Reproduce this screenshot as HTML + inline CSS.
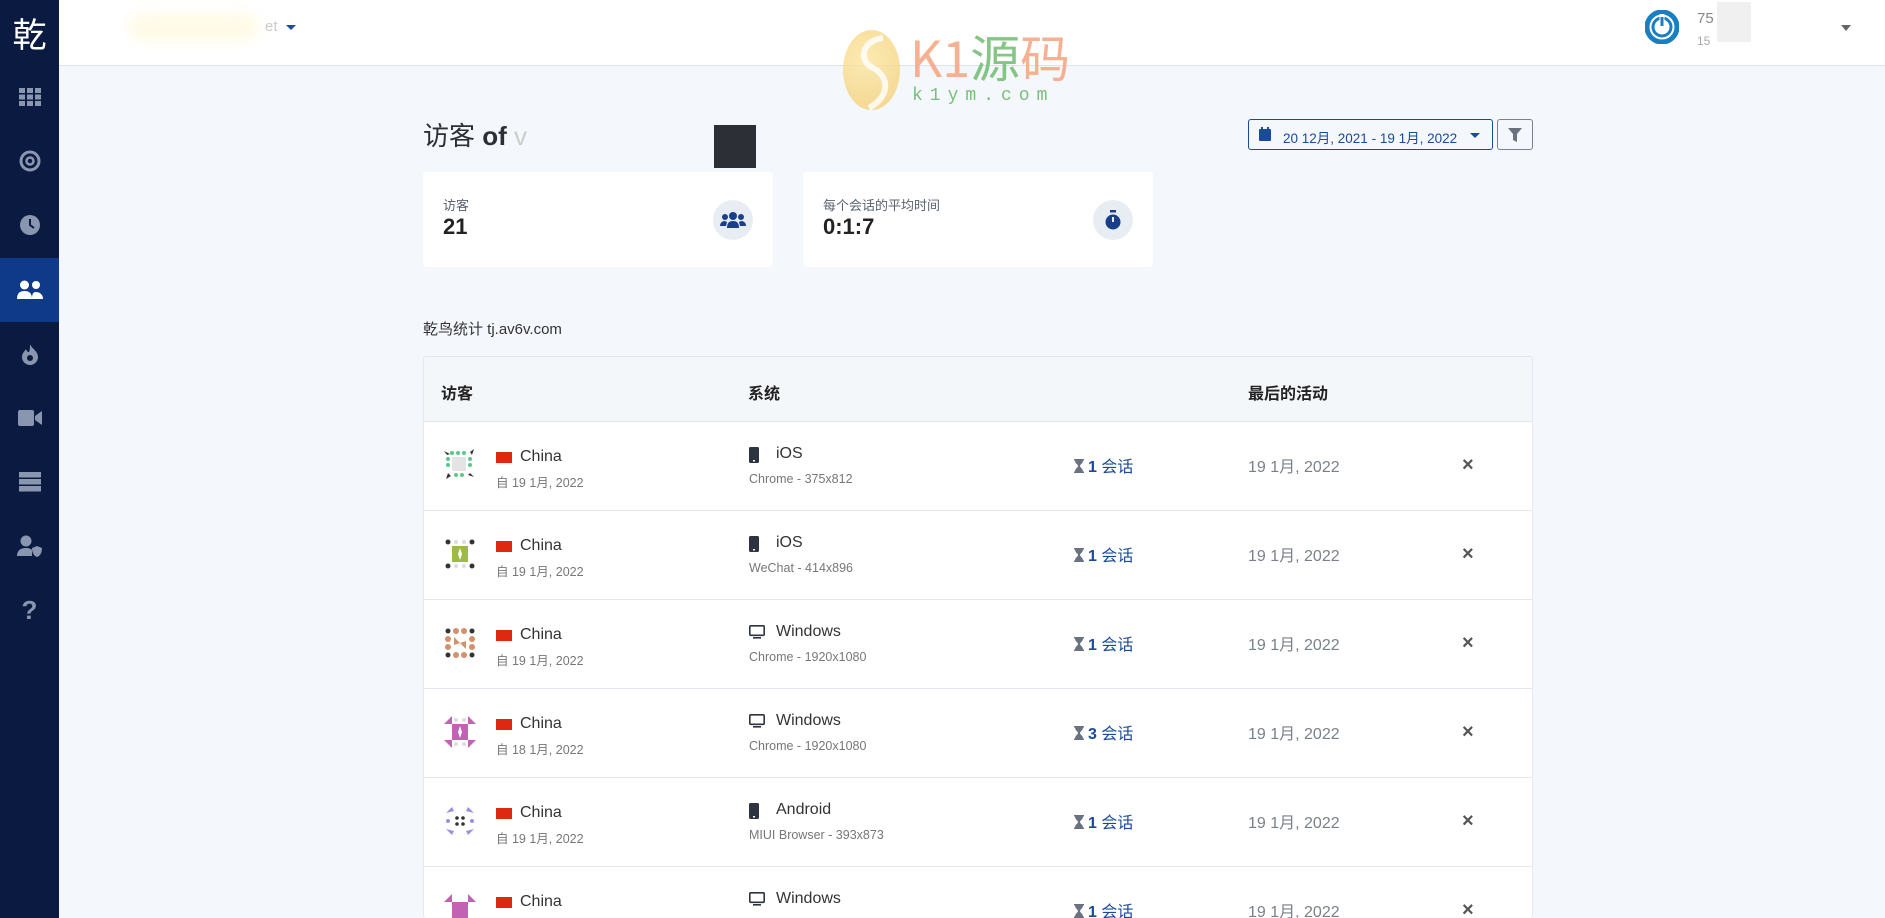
<!DOCTYPE html>
<html><head><meta charset="utf-8"><style>
*{box-sizing:border-box;margin:0;padding:0}
html{width:1885px;height:918px;overflow:hidden}
body{width:1885px;height:918px;overflow:hidden;background:#f4f7fb;font-family:"Liberation Sans","Noto Sans CJK SC",sans-serif;position:relative;color:#2b2f36}
.sb{position:absolute;left:0;top:0;width:59px;height:918px;background:#0b1a40}
.sb .it{position:absolute;left:0;width:59px;height:64px;display:flex;align-items:center;justify-content:center}
.sb .act{background:#0f3a8a}
.hd{position:absolute;left:59px;top:0;right:0;height:66px;background:#fff;border-bottom:1px solid #dde3ec}
.abs{position:absolute}
.card{position:absolute;background:#fff;border-radius:3px;top:172px;height:95px;width:350px}
.card .l{position:absolute;left:20px;top:23px;font-size:13px;color:#5a6270}
.card .v{position:absolute;left:20px;top:42px;font-size:22px;font-weight:bold;color:#222}
.card .ic{position:absolute;right:20px;top:28px;width:40px;height:40px;border-radius:50%;background:#e8edf4;display:flex;align-items:center;justify-content:center}
.tbl{position:absolute;left:423px;top:356px;width:1110px;height:562px;overflow:hidden;background:#fff;border:1px solid #e3e7ee;border-bottom:none;border-radius:3px}
.th{height:65px;background:#f4f7fa;border-bottom:1px solid #e3e7ee;position:relative;font-size:16px;font-weight:bold;color:#222}
.th span{position:absolute;top:23px}
.row{height:89px;border-bottom:1px solid #e3e7ee;position:relative}
.row .av{position:absolute;left:20px;top:27px}
.row .fl{position:absolute;left:72px;top:30px;width:16px;height:11px;background:#de2910}
.row .c{position:absolute;left:96px;top:26px;font-size:16px;color:#333}
.row .cs{position:absolute;left:72px;top:50px;font-size:12.5px;color:#777}
.row .oi{position:absolute;left:325px;top:25px}
.row .os{position:absolute;left:352px;top:23px;font-size:16px;color:#333}
.row .ss{position:absolute;left:325px;top:50px;font-size:12.5px;color:#777}
.row .se{position:absolute;left:650px;top:31px;font-size:16px;color:#1a4a9a}
.row .se svg{vertical-align:-1px;margin-right:4px}
.row .se b{font-weight:bold}
.row .la{position:absolute;left:824px;top:31px;font-size:16px;color:#7a808a}
.row .x{position:absolute;left:1038px;top:32px;font-size:20px;color:#555;font-weight:bold}
</style></head><body>
<div class="sb">
 <div class="it" style="top:0px;color:#fff;font-size:34px;font-family:'Noto Sans CJK SC',sans-serif">乾</div>
 <div class="it" style="top:65px"><svg width="22" height="18" fill="#8a96b0"><rect x="0" y="0" width="6" height="5"/><rect x="8" y="0" width="6" height="5"/><rect x="16" y="0" width="6" height="5"/><rect x="0" y="6.5" width="6" height="5"/><rect x="8" y="6.5" width="6" height="5"/><rect x="16" y="6.5" width="6" height="5"/><rect x="0" y="13" width="6" height="5"/><rect x="8" y="13" width="6" height="5"/><rect x="16" y="13" width="6" height="5"/></svg></div>
 <div class="it" style="top:129px"><svg width="22" height="22"><circle cx="11" cy="11" r="9" fill="none" stroke="#8a96b0" stroke-width="3"/><circle cx="11" cy="11" r="3.5" fill="none" stroke="#8a96b0" stroke-width="2.5"/></svg></div>
 <div class="it" style="top:193px"><svg width="22" height="22"><circle cx="11" cy="11" r="10" fill="#8a96b0"/><path d="M11 5v6l4 3" stroke="#0b1a40" stroke-width="2" fill="none"/></svg></div>
 <div class="it act" style="top:258px"><svg width="26" height="20" fill="#fff"><circle cx="7.5" cy="5" r="4.5"/><circle cx="19" cy="5" r="4"/><path d="M0 19c0-6 3-8 7.5-8s7.5 2 7.5 8z"/><path d="M15 19c0-5 1-7 4-7s7 2 7 7z"/></svg></div>
 <div class="it" style="top:322px"><svg width="18" height="22" fill="#8a96b0"><path d="M9 1c1 4 8 7 8 13a8 8 0 0 1-16 0c0-4 3-6 4-8 1 3 2 3 3 3 1-2 1-5 1-8z"/><circle cx="9" cy="15" r="3" fill="#0b1a40"/></svg></div>
 <div class="it" style="top:386px"><svg width="24" height="16" fill="#8a96b0"><rect x="0" y="0" width="16" height="16" rx="2"/><path d="M17 6l7-5v14l-7-5z"/></svg></div>
 <div class="it" style="top:450px"><svg width="22" height="20" fill="#8a96b0"><rect y="0" width="22" height="5.5"/><rect y="7" width="22" height="5.5"/><rect y="14" width="22" height="5.5"/></svg></div>
 <div class="it" style="top:514px"><svg width="26" height="22" fill="#8a96b0"><circle cx="9" cy="6" r="5.5"/><path d="M0 21c0-6 4-8 9-8 3 0 5 1 6 2v6z"/><path d="M20 11l5 2c0 5-2 8-5 9-3-1-5-4-5-9z"/></svg></div>
 <div class="it" style="top:578px;color:#8a96b0;font-size:26px;font-weight:bold">?</div>
</div>
<div class="hd">
 <div class="abs" style="left:70px;top:12px;width:130px;height:30px;background:#fffbe8;border-radius:15px;filter:blur(6px)"></div>
 <div class="abs" style="left:206px;top:18px;font-size:15px;color:#ccc">et</div>
 <div class="abs" style="left:227px;top:25px;border:5px solid transparent;border-top:5px solid #1a4a9a"></div>
 <svg class="abs" style="left:1586px;top:10px" width="34" height="34"><circle cx="17" cy="17" r="15" fill="none" stroke="#1a7fc0" stroke-width="5"/><circle cx="17" cy="17" r="9" fill="none" stroke="#1a7fc0" stroke-width="3"/><path d="M17 4v10" stroke="#fff" stroke-width="5"/><path d="M17 7v9" stroke="#1a7fc0" stroke-width="3"/></svg>
 <div class="abs" style="left:1638px;top:10px;font-size:15px;color:#888">75</div>
 <div class="abs" style="left:1638px;top:34px;font-size:12px;color:#aaa">15</div>
 <div class="abs" style="left:1658px;top:2px;width:34px;height:40px;background:#f0f0f0"></div>
 <div class="abs" style="left:1782px;top:25px;border:5px solid transparent;border-top:6px solid #666"></div>
</div>
<!-- watermark -->
<div class="abs" style="left:843px;top:30px;width:57px;height:80px;border-radius:50%;background:radial-gradient(circle at 40% 40%,#fbe6a0,#f4cb70);opacity:.8"></div>
<svg class="abs" style="left:843px;top:30px" width="57" height="80"><path d="M40 8C20 10 14 30 30 38s18 28 -4 40" stroke="#fff" stroke-width="6" fill="none" opacity=".8"/></svg>
<div class="abs" style="left:910px;top:28px;font-size:50px;line-height:56px;color:#f5a986;font-family:'Noto Sans CJK SC',sans-serif;opacity:.9">K1<span style="color:#78c07a">源</span>码</div>
<div class="abs" style="left:912px;top:86px;font-size:18px;letter-spacing:7px;color:#78c07a;font-family:'Liberation Mono',monospace">k1ym.com</div>

<div class="abs" style="left:423px;top:116px;font-size:26px;color:#2b2f36">访客 <b>of</b> <span style="color:#ccc">v</span></div>
<div class="abs" style="left:714px;top:125px;width:42px;height:43px;background:#2d2f36"></div>
<div class="abs" style="left:1248px;top:119px;width:245px;height:31px;border:1px solid #1a4a9a;border-radius:3px;background:#f4f7fb;font-size:13.5px;color:#1a4a9a;padding:7px 0 0 34px">20 12月, 2021 - 19 1月, 2022</div>
<svg class="abs" style="left:1259px;top:127px" width="12" height="14" fill="#1a4a9a"><rect x="0" y="2" width="12" height="12" rx="1"/><rect x="2" y="0" width="2" height="3"/><rect x="8" y="0" width="2" height="3"/></svg>
<div class="abs" style="left:1470px;top:133px;border:5px solid transparent;border-top:5px solid #1a4a9a"></div>
<div class="abs" style="left:1497px;top:119px;width:36px;height:31px;border:1px solid #7a8290;border-radius:3px"></div>
<svg class="abs" style="left:1508px;top:128px" width="14" height="14" fill="#6a7280"><path d="M0 0h14l-5 6v8l-4-2v-6z"/></svg>

<div class="card" style="left:423px"><div class="l">访客</div><div class="v">21</div><div class="ic"><svg width="26" height="16" fill="#1a3f8a"><circle cx="13" cy="4" r="4"/><circle cx="5" cy="5" r="3"/><circle cx="21" cy="5" r="3"/><path d="M7 16c0-5 2-7 6-7s6 2 6 7z"/><path d="M0 14c0-3 2-5 5-5l2 1-1 4z"/><path d="M26 14c0-3-2-5-5-5l-2 1 1 4z"/></svg></div></div>
<div class="card" style="left:803px"><div class="l">每个会话的平均时间</div><div class="v">0:1:7</div><div class="ic"><svg width="16" height="20" fill="#1a3f8a"><rect x="5" y="0" width="6" height="2.5"/><circle cx="8" cy="12" r="7.5"/><path d="M8 7v5" stroke="#e8edf4" stroke-width="2"/></svg></div></div>

<div class="abs" style="left:423px;top:318px;font-size:15px;color:#333">乾鸟统计 tj.av6v.com</div>

<svg width="0" height="0" style="position:absolute"><defs><symbol id="hg" viewBox="0 0 10 14"><path d="M0 0h10v1.5H9c0 3-3 4-3 5.5s3 2.5 3 5.5h1V14H0v-1.5h1c0-3 3-4 3-5.5S1 4.5 1 1.5H0z" fill="#6a7280"/></symbol></defs></svg>

<div class="tbl">
 <div class="th"><span style="left:17px">访客</span><span style="left:324px">系统</span><span style="left:824px">最后的活动</span></div>
 
 <div class="row"><svg class="av" width="32" height="32"><g fill="#5ac88a"><circle cx="8" cy="4" r="2"/><circle cx="14" cy="4" r="2"/><circle cx="20" cy="4" r="2"/><circle cx="4" cy="10" r="2"/><circle cx="4" cy="16" r="2"/><circle cx="26" cy="10" r="2"/><circle cx="26" cy="16" r="2"/><circle cx="12" cy="26" r="2"/><circle cx="18" cy="26" r="2"/></g><rect x="8" y="8" width="14" height="14" fill="#e4e4e4"/><path d="M0 2l6 3-3 1zM30 0l-2 6-2-3zM2 30l2-6 3 3zM30 28l-6-2 2-2z" fill="#333"/></svg><div class="fl"></div><div class="c">China</div><div class="cs">自 19 1月, 2022</div><svg class="oi" width="10" height="16"><rect width="10" height="16" rx="1.5" fill="#2d3340"/><rect x="4" y="13" width="2" height="1.5" fill="#fff"/></svg><div class="os">iOS</div><div class="ss">Chrome - 375x812</div><div class="se"><svg width="10" height="14"><use href="#hg"/></svg><b>1</b> 会话</div><div class="la">19 1月, 2022</div><div class="x">×</div></div>

 <div class="row"><svg class="av" width="32" height="32"><g fill="#333"><circle cx="4" cy="4" r="2.5"/><circle cx="28" cy="4" r="2.5"/><circle cx="4" cy="28" r="2.5"/><circle cx="28" cy="28" r="2.5"/></g><g fill="#ddd"><circle cx="12" cy="4" r="2"/><circle cx="20" cy="4" r="2"/><circle cx="12" cy="28" r="2"/><circle cx="20" cy="28" r="2"/></g><rect x="8" y="8" width="16" height="16" fill="#9dbb44"/><path d="M16 10l2 6-2 6-2-6z" fill="#fff"/></svg><div class="fl"></div><div class="c">China</div><div class="cs">自 19 1月, 2022</div><svg class="oi" width="10" height="16"><rect width="10" height="16" rx="1.5" fill="#2d3340"/><rect x="4" y="13" width="2" height="1.5" fill="#fff"/></svg><div class="os">iOS</div><div class="ss">WeChat - 414x896</div><div class="se"><svg width="10" height="14"><use href="#hg"/></svg><b>1</b> 会话</div><div class="la">19 1月, 2022</div><div class="x">×</div></div>

 <div class="row"><svg class="av" width="32" height="32"><g fill="#333"><circle cx="4" cy="4" r="2.5"/><circle cx="28" cy="4" r="2.5"/><circle cx="4" cy="28" r="2.5"/><circle cx="28" cy="28" r="2.5"/></g><g fill="#d4906a"><circle cx="12" cy="4" r="3"/><circle cx="20" cy="4" r="3"/><circle cx="12" cy="28" r="3"/><circle cx="20" cy="28" r="3"/><circle cx="4" cy="12" r="3"/><circle cx="4" cy="20" r="3"/><circle cx="28" cy="12" r="3"/><circle cx="28" cy="20" r="3"/><path d="M10 10l6 6-6 2zM22 22l-6-6 6-2z"/></g></svg><div class="fl"></div><div class="c">China</div><div class="cs">自 19 1月, 2022</div><svg class="oi" width="16" height="14"><rect x="0.8" y="0.8" width="14.4" height="9.5" rx="1" fill="none" stroke="#2d3340" stroke-width="1.6"/><rect x="4" y="12" width="8" height="1.6" fill="#2d3340"/></svg><div class="os">Windows</div><div class="ss">Chrome - 1920x1080</div><div class="se"><svg width="10" height="14"><use href="#hg"/></svg><b>1</b> 会话</div><div class="la">19 1月, 2022</div><div class="x">×</div></div>

 <div class="row"><svg class="av" width="32" height="32"><g fill="#c262b4"><path d="M0 8l8-8v8zM32 8l-8-8v8zM0 24l8 8v-8zM32 24l-8 8v-8z"/><rect x="8" y="8" width="16" height="16"/></g><g fill="#ddd"><circle cx="12" cy="4" r="2"/><circle cx="20" cy="4" r="2"/><circle cx="12" cy="28" r="2"/><circle cx="20" cy="28" r="2"/></g><path d="M16 10l2 6-2 6-2-6z" fill="#fff"/></svg><div class="fl"></div><div class="c">China</div><div class="cs">自 18 1月, 2022</div><svg class="oi" width="16" height="14"><rect x="0.8" y="0.8" width="14.4" height="9.5" rx="1" fill="none" stroke="#2d3340" stroke-width="1.6"/><rect x="4" y="12" width="8" height="1.6" fill="#2d3340"/></svg><div class="os">Windows</div><div class="ss">Chrome - 1920x1080</div><div class="se"><svg width="10" height="14"><use href="#hg"/></svg><b>3</b> 会话</div><div class="la">19 1月, 2022</div><div class="x">×</div></div>

 <div class="row"><svg class="av" width="32" height="32"><g fill="#9a8fe0"><path d="M2 8l6-6 2 4zM30 8l-6-6-2 4zM2 24l6 6 2-4zM30 24l-6 6-2-4z"/><circle cx="4" cy="16" r="2"/><circle cx="28" cy="16" r="2"/></g><g fill="#333"><circle cx="13" cy="13" r="1.8"/><circle cx="19" cy="13" r="1.8"/><circle cx="13" cy="19" r="1.8"/><circle cx="19" cy="19" r="1.8"/></g></svg><div class="fl"></div><div class="c">China</div><div class="cs">自 19 1月, 2022</div><svg class="oi" width="10" height="16"><rect width="10" height="16" rx="1.5" fill="#2d3340"/><rect x="4" y="13" width="2" height="1.5" fill="#fff"/></svg><div class="os">Android</div><div class="ss">MIUI Browser - 393x873</div><div class="se"><svg width="10" height="14"><use href="#hg"/></svg><b>1</b> 会话</div><div class="la">19 1月, 2022</div><div class="x">×</div></div>

 <div class="row"><svg class="av" width="32" height="32"><g fill="#c262b4"><path d="M0 8l8-8v8zM32 8l-8-8v8z"/><rect x="8" y="8" width="16" height="16"/></g></svg><div class="fl"></div><div class="c">China</div><div class="cs">自 19 1月, 2022</div><svg class="oi" width="16" height="14"><rect x="0.8" y="0.8" width="14.4" height="9.5" rx="1" fill="none" stroke="#2d3340" stroke-width="1.6"/><rect x="4" y="12" width="8" height="1.6" fill="#2d3340"/></svg><div class="os">Windows</div><div class="ss">Chrome - 1920x1080</div><div class="se"><svg width="10" height="14"><use href="#hg"/></svg><b>1</b> 会话</div><div class="la">19 1月, 2022</div><div class="x">×</div></div>
</div>
</body></html>
